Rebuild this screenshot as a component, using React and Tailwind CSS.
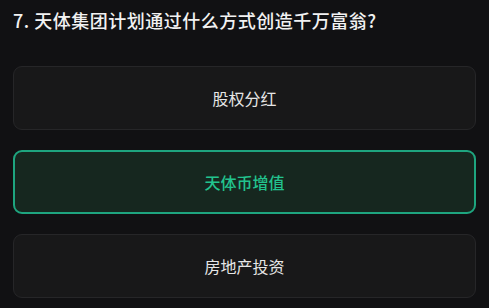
const options = [
  { id: 'a', label: '股权分红' },
  { id: 'b', label: '天体币增值', selected: true },
  { id: 'c', label: '房地产投资' },
]

export default function App() {
  return (
    <div
      className="w-[489px] h-[308px] bg-[#111113] px-[13px] pt-[7px] overflow-hidden"
      style={{ fontFamily: '"Noto Sans CJK SC", "Noto Sans", sans-serif' }}
    >
      <h2 className="text-[18px] leading-[27px] font-medium text-[#f2f2f2] tracking-[0.5px]">
        7. 天体集团计划通过什么方式创造千万富翁?
      </h2>
      <div className="mt-[32px] flex flex-col gap-[20px]">
        {options.map((o) => (
          <button
            key={o.id}
            className={`h-[64px] w-full rounded-[9px] flex items-center justify-center text-[16px] ${
              o.selected
                ? 'border-2 border-[#1ea57f] bg-[#16271f] text-[#22c38e] font-medium'
                : 'border border-[#262628] bg-[#181819] text-[#e6e6e6]'
            }`}
          >
            {o.label}
          </button>
        ))}
      </div>
    </div>
  )
}
